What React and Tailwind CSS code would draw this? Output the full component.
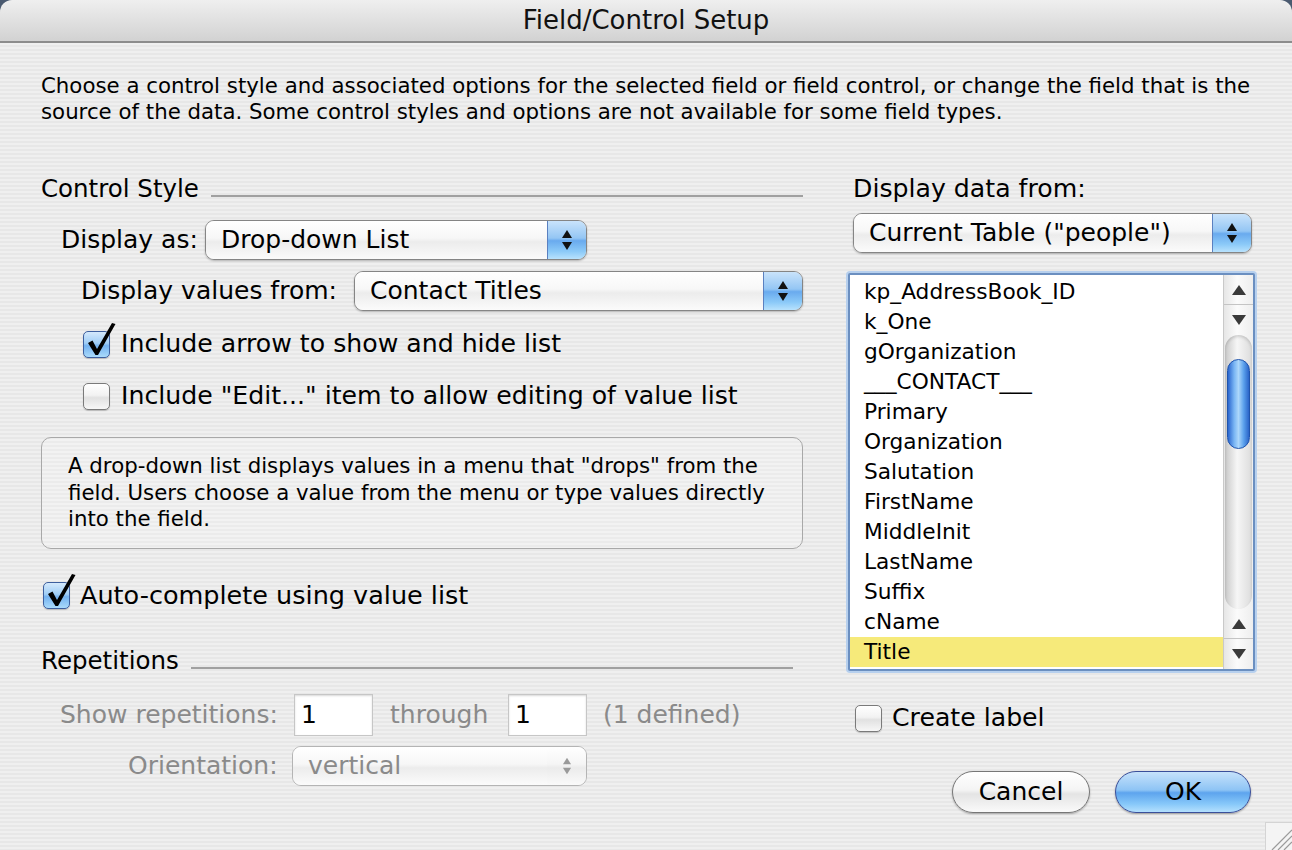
import React from "react";

const stripes =
  "bg-[repeating-linear-gradient(to_bottom,#efefef_0px,#efefef_2px,#e7e7e7_2px,#e7e7e7_4px)]";

function UpDown({ color = "#111", w = 12, h = 22 }) {
  return (
    <svg width={w} height={h} viewBox="0 0 12 22">
      <polygon points="6,1 11,9 1,9" fill={color} />
      <polygon points="1,13 11,13 6,21" fill={color} />
    </svg>
  );
}

function Popup({ label, width, disabled }) {
  return (
    <div
      className={`flex h-[40px] rounded-[9px] border overflow-hidden ${
        disabled
          ? "border-[#b4b4b4]"
          : "border-[#858585] shadow-[0_1px_2px_rgba(0,0,0,0.25)]"
      } ${width}`}
    >
      <div
        className={`flex-1 flex items-center pl-[15px] text-[25px] bg-[linear-gradient(to_bottom,#ffffff_0%,#f7f7f7_45%,#ececec_55%,#fbfbfb_100%)] ${
          disabled ? "text-[#8a8a8a]" : "text-black"
        }`}
      >
        {label}
      </div>
      {disabled ? (
        <div className="w-[39px] flex items-center justify-center bg-[linear-gradient(to_bottom,#ffffff_0%,#f5f5f5_45%,#ebebeb_55%,#fafafa_100%)]">
          <UpDown color="#9a9a9a" w={10} h={18} />
        </div>
      ) : (
        <div className="w-[39px] flex items-center justify-center border-l border-[#5a80c0] bg-[linear-gradient(to_bottom,#c9e3fb_0%,#94c6f4_45%,#69aaee_52%,#8ccaf8_80%,#b8e2fd_100%)]">
          <UpDown />
        </div>
      )}
    </div>
  );
}

function Checkbox({ checked }) {
  return (
    <span
      className={`relative inline-block shrink-0 w-[27px] h-[27px] rounded-[5px] border ${
        checked
          ? "border-[#3d5f9e] bg-[linear-gradient(to_bottom,#d4e9fc_0%,#9fcdf6_45%,#74b2f0_55%,#a9dafb_100%)]"
          : "border-[#7a7a7a] bg-[linear-gradient(to_bottom,#ffffff_0%,#f2f2f2_45%,#e1e1e1_55%,#f7f7f7_100%)]"
      } shadow-[0_1px_1px_rgba(0,0,0,0.2)]`}
    >
      {checked && (
        <svg
          className="absolute left-[1px] top-[-10px]"
          width="32"
          height="36"
          viewBox="0 0 32 36"
        >
          <path
            d="M3 21 L7.5 18.5 L12 27 L27 1 L30.5 2 L13 33 L10.5 33 Z"
            fill="#000"
          />
        </svg>
      )}
    </span>
  );
}

function SectionHeader({ title, width }) {
  return (
    <div className={`flex items-center h-[26px] ${width}`}>
      <span className="text-[24.5px] leading-[26px]">{title}</span>
      <div className="flex-1 ml-[12px] mt-[14px] h-[2px] bg-[#a0a0a0]" />
    </div>
  );
}

function ScrollArrow({ up, border }) {
  return (
    <div
      className={`h-[30px] flex items-center justify-center ${
        border ? "border-b border-[#c4c4c4]" : ""
      }`}
    >
      <svg width="14" height="10" viewBox="0 0 14 10">
        {up ? (
          <polygon points="7,0 14,10 0,10" fill="#3a3a3a" />
        ) : (
          <polygon points="0,0 14,0 7,10" fill="#3a3a3a" />
        )}
      </svg>
    </div>
  );
}

const items = [
  "kp_AddressBook_ID",
  "k_One",
  "gOrganization",
  "___CONTACT___",
  "Primary",
  "Organization",
  "Salutation",
  "FirstName",
  "MiddleInit",
  "LastName",
  "Suffix",
  "cName",
  "Title",
];

export default function App() {
  return (
    <div className="w-[1292px] h-[850px] overflow-hidden bg-[#4a5a70] font-['DejaVu_Sans',sans-serif] text-black">
      <div className="h-full flex flex-col rounded-t-[12px] overflow-hidden">
        <div className="h-[43px] shrink-0 flex items-center justify-center border-b-2 border-[#8c8c8c] bg-[linear-gradient(to_bottom,#efefef,#d2d2d2)] text-[26px] text-[#111]">
          Field/Control Setup
        </div>
        <div className={`flex-1 relative ${stripes}`}>
          <p className="pt-[30px] pl-[41px] text-[21.3px] leading-[26px] whitespace-nowrap">
            Choose a control style and associated options for the selected
            field or field control, or change the field that is the
            <br />
            source of the data. Some control styles and options are not
            available for some field types.
          </p>

          <div className="flex mt-[50px]">
            {/* Left column */}
            <div className="ml-[41px] w-[762px] flex flex-col">
              <div className="mt-[1px]">
                <SectionHeader title="Control Style" width="w-[762px]" />
              </div>

              <div className="mt-[18px] flex items-center h-[39px] pl-[20px]">
                <span className="w-[144px] text-[25px]">Display as:</span>
                <Popup label="Drop-down List" width="w-[382px]" />
              </div>

              <div className="mt-[12px] flex items-center h-[40px] pl-[40px]">
                <span className="w-[273px] text-[25px]">
                  Display values from:
                </span>
                <Popup label="Contact Titles" width="w-[449px]" />
              </div>

              <div className="mt-[18px] flex items-center h-[30px] pl-[42px]">
                <Checkbox checked />
                <span className="ml-[11px] text-[25.2px]">
                  Include arrow to show and hide list
                </span>
              </div>

              <div className="mt-[22px] flex items-center h-[30px] pl-[42px]">
                <Checkbox />
                <span className="ml-[11px] text-[25.2px]">
                  Include "Edit..." item to allow editing of value list
                </span>
              </div>

              <div className="mt-[26px] h-[112px] rounded-[10px] border border-[#a8a8a8] bg-white/20 pl-[26px] pt-[15px] text-[21.3px] leading-[26.5px] whitespace-nowrap">
                A drop-down list displays values in a menu that "drops" from the
                <br />
                field. Users choose a value from the menu or type values directly
                <br />
                into the field.
              </div>

              <div className="mt-[31px] flex items-center h-[30px] pl-[2px]">
                <Checkbox checked />
                <span className="ml-[10px] text-[25.5px]">
                  Auto-complete using value list
                </span>
              </div>

              <div className="mt-[38px]">
                <SectionHeader title="Repetitions" width="w-[752px]" />
              </div>

              <div className="mt-[20px] flex items-center h-[42px] pl-[19px] text-[25px] text-[#8a8a8a]">
                <span className="w-[234px]">Show repetitions:</span>
                <div className="w-[79px] h-[42px] bg-white border border-[#c6c6c6] shadow-[inset_0_1px_2px_rgba(0,0,0,0.15)] flex items-center pl-[6px] text-black">
                  1
                </div>
                <span className="ml-[17px] w-[118px] pl-0">through</span>
                <div className="w-[79px] h-[42px] bg-white border border-[#c6c6c6] shadow-[inset_0_1px_2px_rgba(0,0,0,0.15)] flex items-center pl-[6px] text-black">
                  1
                </div>
                <span className="ml-[16px]">(1 defined)</span>
              </div>

              <div className="mt-[10px] flex items-center h-[40px] pl-[87px] text-[25px] text-[#8a8a8a]">
                <span className="w-[164px]">Orientation:</span>
                <Popup label="vertical" width="w-[295px]" disabled />
              </div>
            </div>

            {/* Right column */}
            <div className="ml-[45px] w-[407px] flex flex-col">
              <div className="pl-[5px] h-[26px] text-[25.2px] leading-[26px] mt-[1px]">
                Display data from:
              </div>
              <div className="mt-[11px] ml-[5px]">
                <Popup label={'Current Table ("people")'} width="w-[399px]" />
              </div>

              <div className="mt-[20px] h-[398px] w-[407px] rounded-[2px] border-[2px] border-[#6b8fc0] shadow-[0_0_0_2px_#b7d0ee] bg-white flex overflow-hidden">
                <div className="flex-1 flex flex-col pt-[2px]">
                  {items.map((it) => (
                    <div
                      key={it}
                      className={`h-[30px] shrink-0 flex items-center pl-[14px] text-[21.7px] ${
                        it === "Title" ? "bg-[#f6ea7a]" : ""
                      }`}
                    >
                      {it}
                    </div>
                  ))}
                </div>
                <div className="w-[30px] flex flex-col border-l border-[#c9c9c9] bg-[linear-gradient(to_right,#e6e6e6,#fbfbfb_45%,#eeeeee)]">
                  <ScrollArrow up border />
                  <ScrollArrow />
                  <div className="flex-1 mx-[1px] rounded-[14px] bg-[linear-gradient(to_right,#c9c9c9,#f6f6f6_45%,#dcdcdc)] shadow-[inset_0_2px_3px_rgba(0,0,0,0.15)] pt-[24px] px-[2px]">
                    <div className="h-[90px] rounded-[13px] border border-[#1f54ad] bg-[linear-gradient(to_right,#2a66cf,#7ab6f4_30%,#acd7fb_50%,#5aa0ec_75%,#2a64c8)]" />
                  </div>
                  <ScrollArrow up border />
                  <ScrollArrow />
                </div>
              </div>

              <div className="mt-[32px] flex items-center h-[30px] pl-[7px]">
                <Checkbox />
                <span className="ml-[10px] text-[25.2px]">Create label</span>
              </div>

              <div className="mt-[38px] flex justify-end pr-[4px] gap-[25px]">
                <div className="w-[138px] h-[42px] rounded-full border border-[#767676] bg-[linear-gradient(to_bottom,#ffffff_0%,#f4f4f4_45%,#e4e4e4_55%,#fafafa_100%)] shadow-[0_1px_2px_rgba(0,0,0,0.3)] flex items-center justify-center text-[25px]">
                  Cancel
                </div>
                <div className="w-[136px] h-[42px] rounded-full border border-[#3a4f9a] bg-[linear-gradient(to_bottom,#c6e2fb_0%,#8ec4f5_45%,#5da4ee_52%,#87c8f9_80%,#b4e0fd_100%)] shadow-[0_1px_2px_rgba(0,0,0,0.35)] flex items-center justify-center text-[25px]">
                  OK
                </div>
              </div>
            </div>
          </div>

          <div className="absolute right-0 bottom-0 w-[27px] h-[28px] bg-[#f4f4f4] border-l border-t border-[#d4d4d4]">
            <svg width="27" height="28" viewBox="0 0 27 28">
              <line x1="6" y1="27" x2="26" y2="7" stroke="#9a9a9a" strokeWidth="1.2" />
              <line x1="12" y1="27" x2="26" y2="13" stroke="#9a9a9a" strokeWidth="1.2" />
              <line x1="18" y1="27" x2="26" y2="19" stroke="#9a9a9a" strokeWidth="1.2" />
            </svg>
          </div>
        </div>
      </div>
    </div>
  );
}
